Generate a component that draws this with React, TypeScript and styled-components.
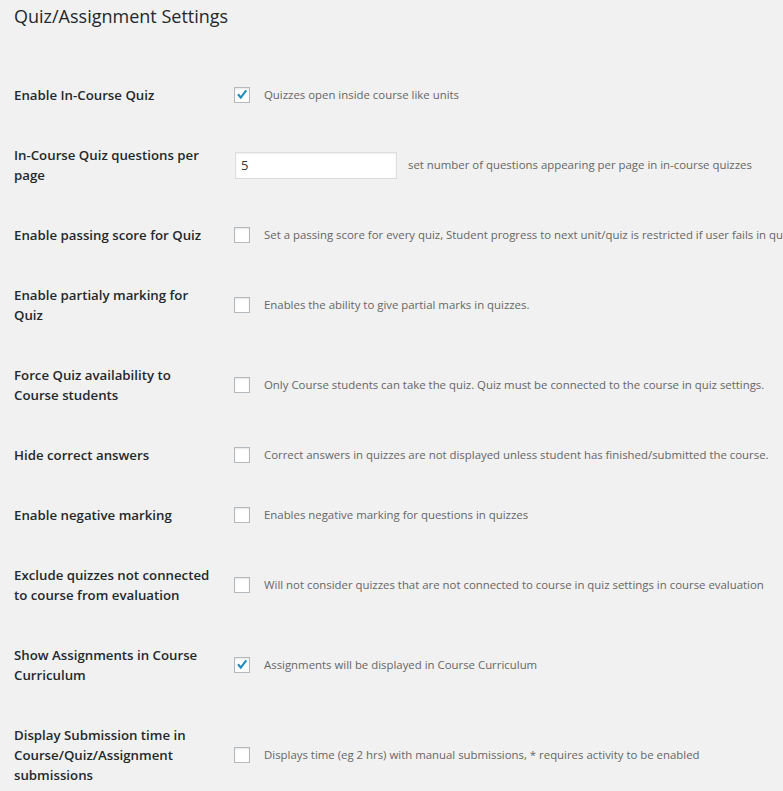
import React from 'react'
import styled, { createGlobalStyle } from 'styled-components'

const GlobalStyle = createGlobalStyle`
  html, body {
    margin: 0;
    padding: 0;
    background: #f1f1f1;
    overflow-x: hidden;
  }
  body {
    font-family: "Open Sans", "Noto Sans", sans-serif;
    color: #23282d;
  }
`

const Page = styled.div`
  padding: 0 14px;
`

const Title = styled.h2`
  margin: 0;
  padding-top: 4px;
  font-size: 18px;
  font-weight: 400;
  line-height: 24px;
  color: #23282d;
`

const Table = styled.div`
  margin-top: 37px;
  display: flex;
  flex-direction: column;
`

const Row = styled.div`
  display: grid;
  grid-template-columns: 220px auto;
  align-items: center;
  padding: 20px 0;
`

const Label = styled.div`
  width: 200px;
  font-size: 13.25px;
  font-weight: 600;
  line-height: 20px;
  color: #23282d;
`

const Field = styled.div`
  display: flex;
  align-items: center;
  white-space: nowrap;
`

const Box = styled.span`
  box-sizing: border-box;
  width: 16px;
  height: 16px;
  flex: none;
  border: 1px solid #b4b9be;
  background: #fff;
  box-shadow: inset 0 1px 2px rgba(0, 0, 0, 0.1);
  display: flex;
  align-items: center;
  justify-content: center;
`

const Desc = styled.span<{ $gap: number }>`
  margin-left: ${p => p.$gap}px;
  font-size: 11.4px;
  line-height: 20px;
  color: #666;
`

const NumberInput = styled.div`
  box-sizing: border-box;
  width: 162px;
  height: 27px;
  margin-left: 1px;
  flex: none;
  border: 1px solid #ddd;
  background: #fff;
  box-shadow: inset 0 1px 2px rgba(0, 0, 0, 0.07);
  padding: 0 5px;
  font-size: 13px;
  line-height: 25px;
  color: #32373c;
`

const Check = () => (
  <svg width="16" height="16" viewBox="0 0 16 16">
    <path d="M3.4 7.2 L6.6 10.9 L12.9 2.6" fill="none" stroke="#1e8cbe" strokeWidth="2.4" />
  </svg>
)

type Setting = {
  label: string[]
  desc: string
  checked?: boolean
  input?: string
}

const settings: Setting[] = [
  { label: ['Enable In-Course Quiz'], desc: 'Quizzes open inside course like units', checked: true },
  {
    label: ['In-Course Quiz questions per', 'page'],
    desc: 'set number of questions appearing per page in in-course quizzes',
    input: '5',
  },
  {
    label: ['Enable passing score for Quiz'],
    desc: 'Set a passing score for every quiz, Student progress to next unit/quiz is restricted if user fails in quiz.',
  },
  { label: ['Enable partialy marking for', 'Quiz'], desc: 'Enables the ability to give partial marks in quizzes.' },
  {
    label: ['Force Quiz availability to', 'Course students'],
    desc: 'Only Course students can take the quiz. Quiz must be connected to the course in quiz settings.',
  },
  {
    label: ['Hide correct answers'],
    desc: 'Correct answers in quizzes are not displayed unless student has finished/submitted the course.',
  },
  { label: ['Enable negative marking'], desc: 'Enables negative marking for questions in quizzes' },
  {
    label: ['Exclude quizzes not connected', 'to course from evaluation'],
    desc: 'Will not consider quizzes that are not connected to course in quiz settings in course evaluation',
  },
  {
    label: ['Show Assignments in Course', 'Curriculum'],
    desc: 'Assignments will be displayed in Course Curriculum',
    checked: true,
  },
  {
    label: ['Display Submission time in', 'Course/Quiz/Assignment', 'submissions'],
    desc: 'Displays time (eg 2 hrs) with manual submissions, * requires activity to be enabled',
  },
]

const App = () => {
  return (
    <Page>
      <GlobalStyle />
      <Title>Quiz/Assignment Settings</Title>
      <Table>
        {settings.map(s => (
          <Row key={s.label.join(' ')}>
            <Label>
              {s.label.map((l, i) => (
                <div key={i}>{l}</div>
              ))}
            </Label>
            <Field>
              {s.input !== undefined ? (
                <>
                  <NumberInput>{s.input}</NumberInput>
                  <Desc $gap={11}>{s.desc}</Desc>
                </>
              ) : (
                <>
                  <Box>{s.checked && <Check />}</Box>
                  <Desc $gap={14}>{s.desc}</Desc>
                </>
              )}
            </Field>
          </Row>
        ))}
      </Table>
    </Page>
  )
}

export default App
